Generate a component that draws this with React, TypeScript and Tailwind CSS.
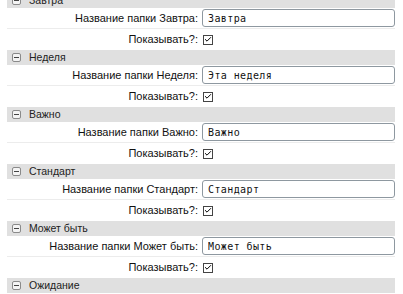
import { Check } from 'lucide-react';

const SECTIONS: { name: string; value: string }[] = [
  { name: 'Завтра', value: 'Завтра' },
  { name: 'Неделя', value: 'Эта неделя' },
  { name: 'Важно', value: 'Важно' },
  { name: 'Стандарт', value: 'Стандарт' },
  { name: 'Может быть', value: 'Может быть' },
  { name: 'Ожидание', value: 'Ожидание' },
];

function Section({ name, value }: { name: string; value: string }) {
  return (
    <div>
      <div className="h-[15px] bg-[#e0e0e0] flex items-center pl-[5px] gap-[8px]">
        <div className="w-[9px] h-[9px] border border-[#8a8a8a] rounded-[2px] bg-[#f4f4f4] flex items-center justify-center">
          <div className="w-[5px] h-px bg-[#444]" />
        </div>
        <span className="text-[10.5px] leading-none text-[#222]">{name}</span>
      </div>
      <div className="h-[21px] flex items-center border-b border-[#ececec]">
        <label className="w-[195px] pr-[4px] text-right text-[11px] text-[#111]">Название папки {name}:</label>
        <input
          readOnly
          value={value}
          className="w-[193px] h-[18px] border border-[#8e98a0] rounded-[3px] px-[5px] text-[10px] tracking-[0.4px] text-[#111] bg-white outline-none font-['DejaVu_Sans_Mono',monospace]"
        />
      </div>
      <div className="h-[21px] flex items-center">
        <label className="w-[195px] pr-[4px] text-right text-[11px] text-[#111]">Показывать?:</label>
        <div className="ml-[1px] w-[10px] h-[10px] border border-[#444] bg-white flex items-center justify-center">
          <Check className="w-[9px] h-[9px] text-black" strokeWidth={3} />
        </div>
      </div>
    </div>
  );
}

export default function App() {
  return (
    <div className="w-[403px] h-[294px] overflow-hidden bg-white font-['Liberation_Sans',Arial,sans-serif]">
      <div className="-mt-[7px] pl-[7px] pr-[8px]">
        {SECTIONS.map((s) => (
          <Section key={s.name} name={s.name} value={s.value} />
        ))}
      </div>
    </div>
  );
}
